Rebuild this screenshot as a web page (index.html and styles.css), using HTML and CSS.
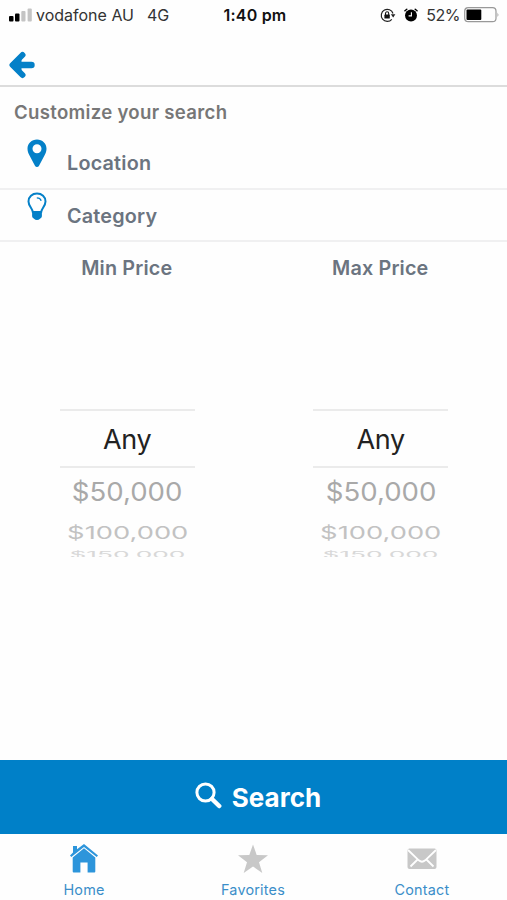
FILE: index.html
```
<!DOCTYPE html>
<html lang="en">
<head>
    <meta charset="UTF-8">
    <meta name="viewport" content="width=device-width, initial-scale=1.0">
    <title>Customize your search</title>
    <link rel="stylesheet" href="styles.css">
</head>
<body>

    <div class="status-bar">
        <div class="status-left">
            <svg class="signal" width="23" height="14" viewBox="0 0 23 14">
                <rect x="0" y="8" width="4.5" height="5.5" rx="1" fill="#000"/>
                <rect x="6" y="5.5" width="4.5" height="8" rx="1" fill="#000"/>
                <rect x="12.3" y="3" width="4.2" height="10.5" rx="1" fill="#c4c4c4"/>
                <rect x="18.6" y="0.5" width="4.2" height="13" rx="1" fill="#c4c4c4"/>
            </svg>
            <span class="carrier">vodafone AU</span>
            <span class="network">4G</span>
        </div>
        <div class="status-time">1:40 pm</div>
        <div class="status-right">
            <svg width="16" height="15" viewBox="0 0 16 15">
                <path d="M13 5.5A6 6 0 1 0 11.8 11.3" fill="none" stroke="#222" stroke-width="1.2"/>
                <path d="M10.8 6.3h4.6l-2.2 3.2z" fill="#222"/>
                <rect x="4.4" y="6.6" width="5.4" height="4" rx="0.6" fill="#111"/>
                <path d="M5.5 7V5.4a1.6 1.6 0 0 1 3.2 0V7" fill="none" stroke="#111" stroke-width="1.1"/>
            </svg>
            <svg class="alarm" width="14" height="14" viewBox="0 0 14 14">
                <circle cx="7" cy="7.5" r="6" fill="#000"/>
                <path d="M0.9 2.8L2.8 1.2M13.1 2.8L11.2 1.2" stroke="#000" stroke-width="1.4" stroke-linecap="round"/>
                <path d="M7.4 4.2v3.7H4.6" fill="none" stroke="#fff" stroke-width="1.1"/>
            </svg>
            <span class="percent">52%</span>
            <svg class="battery" width="36" height="16" viewBox="0 0 36 16">
                <rect x="0.7" y="0.7" width="31.3" height="14" rx="3.5" fill="none" stroke="#999" stroke-width="1.2"/>
                <rect x="2.5" y="2.5" width="14.8" height="10.4" rx="1" fill="#000"/>
                <path d="M33.5 5.5q1.8 2.2 0 4.6z" fill="#999"/>
            </svg>
        </div>
    </div>

    <div class="header">
        <svg width="28" height="28" viewBox="0 0 28 28">
            <path d="M14.5 4L4.5 14L14.5 24" fill="none" stroke="#0480c8" stroke-width="6" stroke-linecap="round" stroke-linejoin="round"/>
            <path d="M6 14h17.5" stroke="#0480c8" stroke-width="6.4" stroke-linecap="round"/>
            <path d="M4 14l9.500-7v14z" fill="#0480c8"/>
        </svg>
    </div>

    <h1>Customize your search</h1>

    <div class="row">
        <svg class="row-icon" width="20" height="29" viewBox="0 0 20 29">
            <path fill-rule="evenodd" d="M10 0.5C4.6 0.5 0.5 4.6 0.5 9.7c0 2.5 0.8 4.3 1.9 6.6L8.1 27c0.8 1.4 3 1.4 3.8 0l5.7-10.7c1.1-2.3 1.9-4.1 1.9-6.6C19.5 4.6 15.4 0.5 10 0.5zM10 5.2a4.5 4.5 0 1 1 0 9a4.5 4.5 0 1 1 0-9z" fill="#0480c8"/>
        </svg>
        <span>Location</span>
    </div>
    <div class="row">
        <svg class="row-icon" width="20" height="29" viewBox="0 0 20 29">
            <path d="M5.8 20C5.4 16.2 1.5 14 1.5 9.4C1.5 4.8 5.2 1.6 10 1.6s8.5 3.2 8.5 7.8c0 4.6-3.9 6.8-4.3 10.6z" fill="none" stroke="#0480c8" stroke-width="2"/>
            <path d="M5.1 19.3h9.8v4.9q0 1.6-1.6 2.3q-3.3 3.2-6.6 0q-1.6-.7-1.6-2.3z" fill="#0480c8"/>
            <path d="M9.8 5.8q3.5 0 4.4 2.9" fill="none" stroke="#0480c8" stroke-width="1.3"/>
        </svg>
        <span>Category</span>
    </div>

    <div class="prices">
        <div class="price">
            <h2>Min Price</h2>
            <div class="picker">
                <div class="option selected">Any</div>
                <div class="option second"><span>$50,000</span></div>
                <div class="option third"><span>$100,000</span></div>
                <div class="option fourth"><span>$150,000</span></div>
            </div>
        </div>
        <div class="price">
            <h2>Max Price</h2>
            <div class="picker">
                <div class="option selected">Any</div>
                <div class="option second"><span>$50,000</span></div>
                <div class="option third"><span>$100,000</span></div>
                <div class="option fourth"><span>$150,000</span></div>
            </div>
        </div>
    </div>

    <button class="search-btn">
        <svg width="27" height="27" viewBox="0 0 27 27">
            <circle cx="10.5" cy="10.5" r="8.6" fill="none" stroke="#fff" stroke-width="3"/>
            <path d="M17 17l7.2 7" stroke="#fff" stroke-width="4.5" stroke-linecap="round"/>
        </svg>
        <span>Search</span>
    </button>

    <div class="tab-bar">
        <div class="tab">
            <svg width="30" height="32" viewBox="0 0 30 32">
                <path d="M4 9.5V3h4v3.2L15 1l14 11.5-1.3 1.6L15 3.9 2.3 14.1 1 12.5z" fill="#2d95db"/>
                <path d="M15 5.3l11.3 9.1V28.5q0 1-1 1h-6.7V19.5h-7.2v10H4.7q-1 0-1-1V14.4z" fill="#2d95db"/>
            </svg>
            <span>Home</span>
        </div>
        <div class="tab">
            <svg width="32" height="32" viewBox="0 0 32 32">
                <path d="M16 1.5l3.7 10.6 11.3.2-9 6.9 3.300 10.800L16 23.5 6.700 30 10 19.200 1 12.300l11.300-.2z" fill="#c8c8c8"/>
            </svg>
            <span>Favorites</span>
        </div>
        <div class="tab">
            <svg width="30" height="32" viewBox="0 0 30 32">
                <rect x="0.5" y="5.5" width="29" height="20.5" rx="2" fill="#c8c8c8"/>
                <path d="M1 7l10.8 10.3q3.2 2.8 6.4 0L29 7M10.6 16.5L3.5 23.5M19.4 16.5l7.1 7" fill="none" stroke="#fff" stroke-width="1.8"/>
            </svg>
            <span>Contact</span>
        </div>
    </div>

</body>
</html>
```

FILE: styles.css
```
* {
    margin: 0;
    padding: 0;
    box-sizing: border-box;
    font-family: "Inter", "Liberation Sans", sans-serif;
}

body {
    background: #fefefe;
    display: flex;
    flex-direction: column;
    height: 900px;
    overflow: hidden;
}

svg {
    display: block;
    flex-shrink: 0;
}

.status-bar {
    display: grid;
    grid-template-columns: 1fr auto 1fr;
    align-items: center;
    height: 30px;
    padding: 0 7px 0 9px;
    font-size: 16px;
    color: #333;
}

.status-left, .status-right {
    display: flex;
    align-items: center;
}

.status-right {
    justify-content: flex-end;
}

.carrier {
    margin-left: 4px;
}

.network {
    margin-left: 13px;
}

.status-time {
    padding-left: 1px;
    font-weight: 600;
    letter-spacing: 0.2px;
    color: #111;
}

.alarm {
    margin-left: 8px;
}

.percent {
    margin-left: 8px;
    letter-spacing: -0.5px;
}

.battery {
    margin-left: 4px;
}

.header {
    height: 57px;
    padding: 21px 0 0 8px;
    border-bottom: 2px solid #dcdcdc;
}

h1 {
    height: 50px;
    line-height: 51px;
    padding-left: 14px;
    font-size: 18.6px;
    font-weight: 600;
    letter-spacing: 0.3px;
    color: #777;
}

.row {
    display: flex;
    height: 52.5px;
    padding-left: 27px;
    border-bottom: 2px solid #f0f0f1;
    font-size: 19.8px;
    font-weight: 600;
    letter-spacing: 0.2px;
    line-height: 53px;
    color: #6b7480;
}

.row-icon {
    margin: 2px 20px 0 0;
}

.prices {
    display: flex;
    flex: 1;
}

.price {
    flex: 1;
    text-align: center;
}

h2 {
    height: 52px;
    line-height: 53px;
    font-size: 19.8px;
    font-weight: 600;
    letter-spacing: 0.15px;
    color: #6b7480;
}

.picker {
    width: 136px;
    height: 148px;
    margin: 115px auto 0;
    padding-left: 1px;
    overflow: hidden;
}

.option {
    display: flex;
    align-items: center;
    justify-content: center;
    font-size: 26px;
    white-space: nowrap;
}

.option span {
    display: inline-block;
}

.selected {
    height: 59px;
    padding-top: 2px;
    border-top: 2px solid #ebebeb;
    border-bottom: 2px solid #ebebeb;
    font-size: 27px;
    letter-spacing: -0.3px;
    color: #222;
}

.second {
    height: 47px;
    color: #a9a9a9;
}

.second span {
    transform: scale(1.06, 0.98);
}

.third {
    height: 34px;
    color: #c2c2c2;
}

.third span {
    transform: scale(1.05, 0.66);
}

.fourth {
    height: 11px;
    color: #d8d8d8;
}

.fourth span {
    transform: scale(1.01, 0.34);
}

.search-btn {
    display: flex;
    align-items: center;
    justify-content: center;
    gap: 10px;
    height: 74px;
    padding-left: 9px;
    border: none;
    background: #0080c8;
    color: white;
    font-size: 26px;
    font-weight: 700;
}

.search-btn svg {
    margin-top: -4px;
}

.tab-bar {
    display: flex;
    height: 66px;
}

.tab {
    flex: 1;
    display: flex;
    flex-direction: column;
    align-items: center;
    padding: 9px 1px 0 0;
    font-size: 14.4px;
    line-height: 18px;
    letter-spacing: 0.2px;
    color: #3b8ec9;
}

.tab span {
    margin-top: 6px;
}
```
